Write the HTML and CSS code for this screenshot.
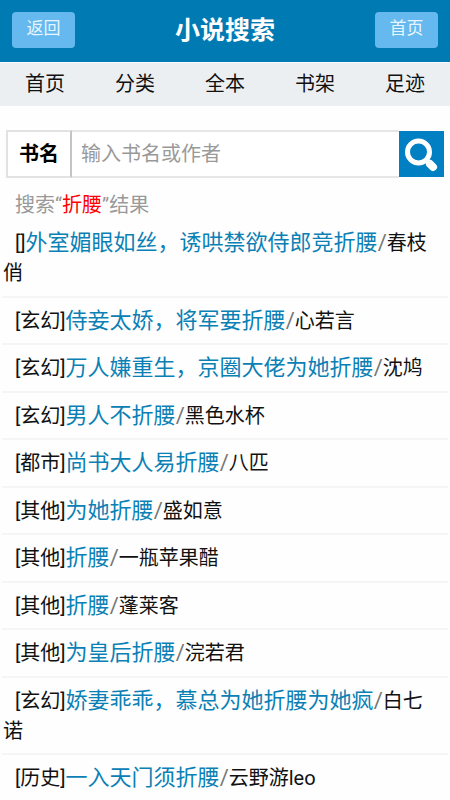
FILE: index.html
```html
<!DOCTYPE html>
<html lang="zh-CN">
<head>
<meta charset="utf-8">
<meta name="viewport" content="width=device-width, initial-scale=1">
<title>小说搜索</title>
<link rel="stylesheet" href="styles.css">
</head>
<body>
<header class="header">
  <a class="header-btn" href="#">返回</a>
  <h1 class="header-title">小说搜索</h1>
  <a class="header-btn" href="#">首页</a>
</header>
<nav class="nav">
  <a href="#">首页</a>
  <a href="#">分类</a>
  <a href="#">全本</a>
  <a href="#">书架</a>
  <a href="#">足迹</a>
</nav>
<form class="search">
  <label class="search-label" for="keyword">书名</label>
  <input class="search-input" id="keyword" type="text" placeholder="输入书名或作者">
  <button class="search-btn" type="submit" aria-label="搜索">
    <svg viewBox="0 0 45 46" width="45" height="46" aria-hidden="true">
      <circle cx="19.5" cy="21" r="11" fill="none" stroke="#fff" stroke-width="5"/>
      <path d="M27.5 29.5 L30 31.5" stroke="#fff" stroke-width="5"/>
      <path d="M31 33 L34 36" stroke="#fff" stroke-width="8" stroke-linecap="round"/>
    </svg>
  </button>
</form>
<p class="summary">搜索“<em>折腰</em>”结果</p>
<ul class="results">
  <li>[]<a href="#">外室媚眼如丝，诱哄禁欲侍郎竞折腰</a><i>/</i>春枝俏</li>
  <li>[玄幻]<a href="#">侍妾太娇，将军要折腰</a><i>/</i>心若言</li>
  <li>[玄幻]<a href="#">万人嫌重生，京圈大佬为她折腰</a><i>/</i>沈鸠</li>
  <li>[玄幻]<a href="#">男人不折腰</a><i>/</i>黑色水杯</li>
  <li>[都市]<a href="#">尚书大人易折腰</a><i>/</i>八匹</li>
  <li>[其他]<a href="#">为她折腰</a><i>/</i>盛如意</li>
  <li>[其他]<a href="#">折腰</a><i>/</i>一瓶苹果醋</li>
  <li>[其他]<a href="#">折腰</a><i>/</i>蓬莱客</li>
  <li>[其他]<a href="#">为皇后折腰</a><i>/</i>浣若君</li>
  <li>[玄幻]<a href="#">娇妻乖乖，慕总为她折腰为她疯</a><i>/</i>白七诺</li>
  <li>[历史]<a href="#">一入天门须折腰</a><i>/</i>云野游leo</li>
</ul>
</body>
</html>
```
FILE: styles.css
```css
* {
  box-sizing: border-box;
}

body {
  display: flex;
  flex-direction: column;
  min-height: 100vh;
  margin: 0;
  background: #fefefe;
  color: #111;
  font: 20px/30px Roboto, "Noto Sans CJK SC", sans-serif;
}

a {
  text-decoration: none;
}

.header {
  display: flex;
  align-items: flex-start;
  justify-content: space-between;
  padding: 12px;
  background: #007ab3;
}

.header-btn {
  width: 63px;
  height: 36px;
  border-radius: 4px;
  background: #66b9ee;
  color: #e6f5ff;
  font-size: 17px;
  line-height: 32px;
  text-align: center;
}

.header-title {
  margin: 0;
  color: #fff;
  font-size: 25px;
  line-height: 38px;
}

.nav {
  display: flex;
  border-top: 1px solid #f6fafb;
  background: #eceff1;
}

.nav a {
  flex: 1;
  color: #111;
  line-height: 43px;
  text-align: center;
}

.search {
  display: flex;
  align-items: center;
  margin: 24px 6px 0;
}

.search-label {
  width: 66px;
  height: 48px;
  border: 2px solid #e2e2e2;
  border-right-color: #c4c4c4;
  background: #fff;
  color: #000;
  font-weight: bold;
  line-height: 44px;
  text-align: center;
}

.search-input {
  flex: 1;
  min-width: 0;
  height: 48px;
  padding: 0 9px;
  border: solid #e6e6e6;
  border-width: 2px 0;
  background: #fff;
  font: inherit;
}

.search-input::placeholder {
  color: #999;
  opacity: 1;
}

.search-btn {
  width: 45px;
  height: 46px;
  padding: 0;
  border: 0;
  background: #007fc3;
}

.search-btn svg {
  display: block;
}

.summary {
  margin: 12px 15px 0;
  color: #999;
}

.summary em {
  color: #f00;
  font-style: normal;
}

.results {
  display: flex;
  flex: 1;
  flex-direction: column;
  margin: 0 2px;
  padding: 0;
  list-style: none;
}

.results li {
  flex: 1 0 auto;
  padding: 8px 12px 7px 1px;
  border-bottom: 2px solid #f5f5f5;
  text-indent: 12px;
}

.results li:last-child {
  padding-bottom: 6px;
  border-bottom: 0;
}

.results a {
  color: #0b80b5;
  font-size: 22px;
}

.results i {
  color: #777;
  font-size: 22px;
  font-style: normal;
}
```
